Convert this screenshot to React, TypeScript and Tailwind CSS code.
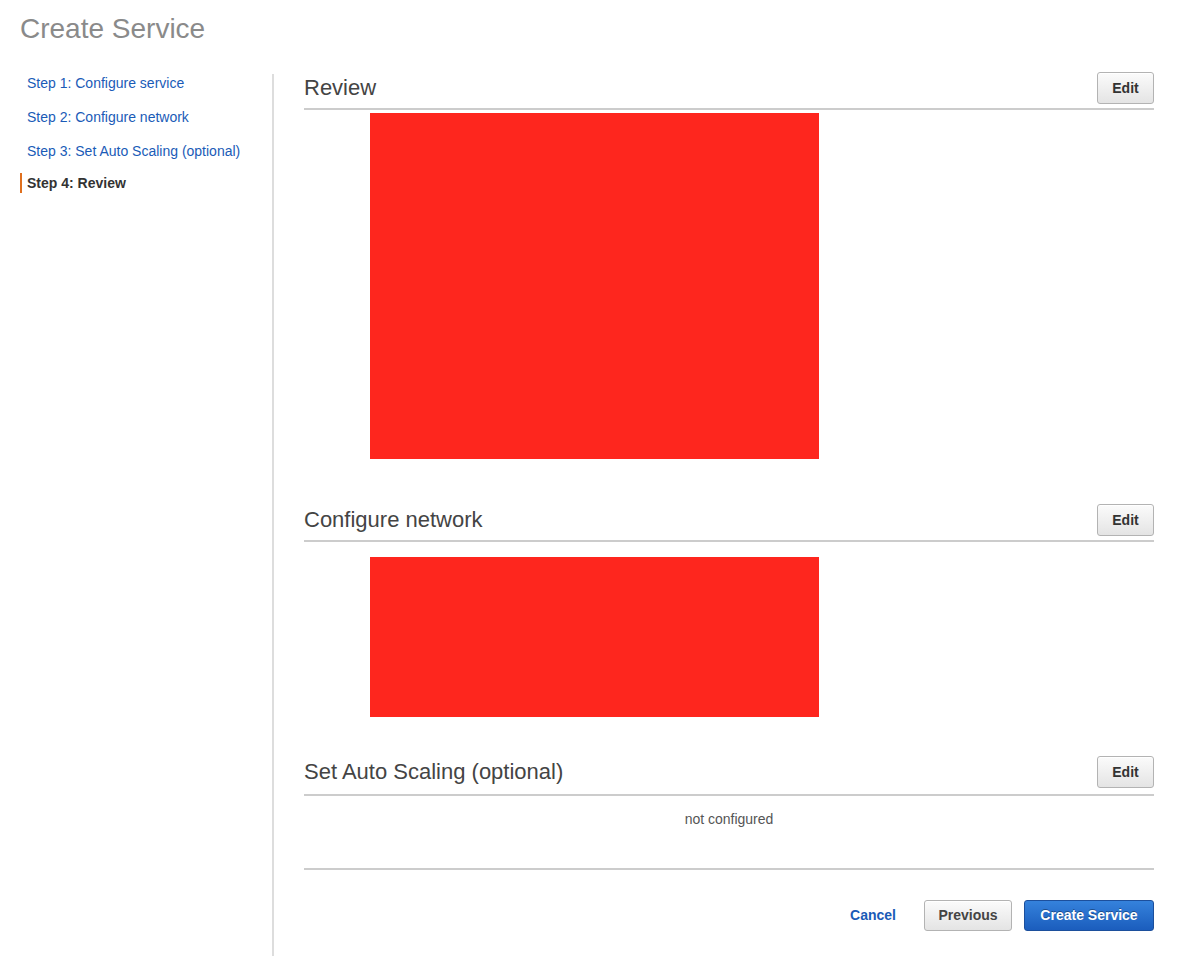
const font = { fontFamily: '"Liberation Sans", Helvetica, Arial, sans-serif' };

const steps = [
  "Step 1: Configure service",
  "Step 2: Configure network",
  "Step 3: Set Auto Scaling (optional)",
];

function EditButton() {
  return (
    <button className="h-[32px] w-[57px] shrink-0 rounded-[3px] border border-[#b3b3b3] bg-gradient-to-b from-[#fbfbfb] to-[#e4e4e4] text-[14px] font-bold text-[#333] shadow-[inset_0_1px_0_#fff]">
      Edit
    </button>
  );
}

function SectionHeader({ title, pad = "pb-[4px]" }: { title: string; pad?: string }) {
  return (
    <div className={`flex items-center justify-between border-b-2 border-[#cccccc] ${pad}`}>
      <h2 className="text-[22px] leading-[28px] text-[#444]">{title}</h2>
      <EditButton />
    </div>
  );
}

export default function App() {
  return (
    <div style={font} className="flex min-h-[956px] flex-col bg-white px-[20px] pt-[12px]">
      <h1 className="mb-[26px] text-[28px] leading-[34px] text-[#8a8a8a]">Create Service</h1>

      <div className="flex flex-1">
        {/* Wizard steps */}
        <nav className="mt-[2px] w-[254px] shrink-0 border-r-2 border-[#dddddd]">
          {steps.map((s) => (
            <div key={s} className="mb-[16px] pl-[7px] text-[14px] leading-[18px] text-[#1a5bb7]">
              {s}
            </div>
          ))}
          <div className="-mt-[3px] border-l-2 border-[#e0701e] py-[1px] pl-[5px] text-[14px] font-bold leading-[18px] text-[#333]">
            Step 4: Review
          </div>
        </nav>

        <main className="w-[880px] shrink-0 pl-[30px]">
          <section>
            <SectionHeader title="Review" />
            <div className="ml-[66px] mt-[3px] h-[346px] w-[449px] bg-[#fe261e]" />
          </section>

          <section className="mt-[45px]">
            <SectionHeader title="Configure network" />
            <div className="ml-[66px] mt-[15px] h-[160px] w-[449px] bg-[#fe261e]" />
          </section>

          <section className="mt-[39px]">
            <SectionHeader title="Set Auto Scaling (optional)" pad="pb-[6px]" />
            <p className="mt-[13px] text-center text-[14px] leading-[20px] text-[#555]">not configured</p>
          </section>

          <div className="mt-[39px] border-t-2 border-[#cccccc]" />

          <div className="mt-[30px] flex items-center justify-end">
            <button className="mr-[28px] text-[14px] font-bold text-[#1a5bb7]">Cancel</button>
            <button className="mr-[12px] h-[31px] w-[88px] rounded-[3px] border border-[#b3b3b3] bg-gradient-to-b from-[#fbfbfb] to-[#e4e4e4] text-[14px] font-bold text-[#444] shadow-[inset_0_1px_0_#fff]">
              Previous
            </button>
            <button className="h-[31px] w-[130px] rounded-[3px] border border-[#1c4f9c] bg-gradient-to-b from-[#3582dc] to-[#1b5dbd] text-[14px] font-bold text-white [text-shadow:0_-1px_0_rgba(0,0,0,0.35)]">
              Create Service
            </button>
          </div>
        </main>
      </div>
    </div>
  );
}
